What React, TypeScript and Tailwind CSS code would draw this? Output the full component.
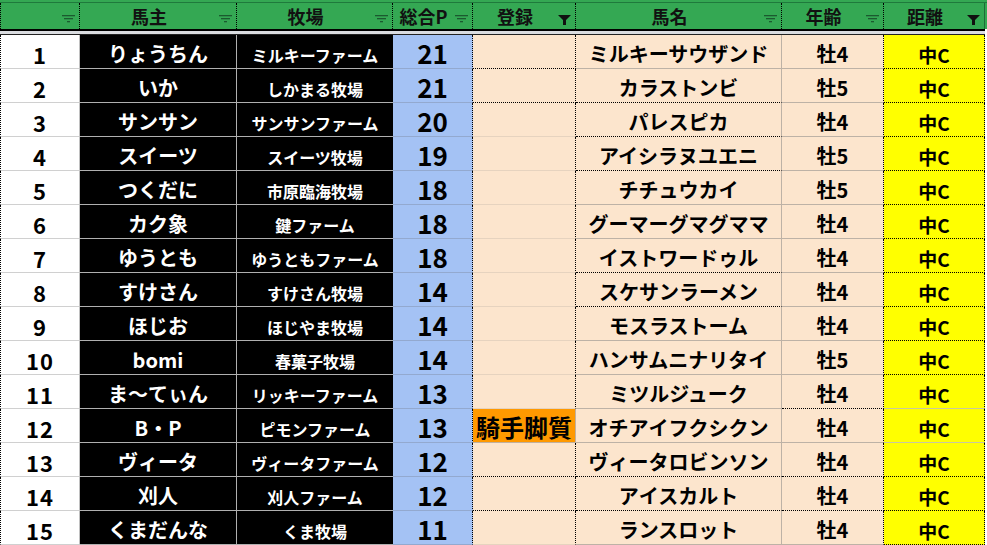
import React from "react";

type Line = "d" | "g";

type Row = {
  n: number;
  owner: string;
  farm: string;
  p: number;
  reg: string;
  horse: string;
  age: string;
  dist: string;
  // 下罫線: 登録 / 馬名 / 年齢 / 距離
  b: [Line, Line, Line, Line];
};

const rows: Row[] = [
  { n: 1, owner: "りょうちん", farm: "ミルキーファーム", p: 21, reg: "", horse: "ミルキーサウザンド", age: "牡4", dist: "中C", b: ["d", "g", "g", "d"] },
  { n: 2, owner: "いか", farm: "しかまる牧場", p: 21, reg: "", horse: "カラストンビ", age: "牡5", dist: "中C", b: ["d", "d", "g", "d"] },
  { n: 3, owner: "サンサン", farm: "サンサンファーム", p: 20, reg: "", horse: "パレスピカ", age: "牡4", dist: "中C", b: ["g", "d", "g", "d"] },
  { n: 4, owner: "スイーツ", farm: "スイーツ牧場", p: 19, reg: "", horse: "アイシラヌユエニ", age: "牡5", dist: "中C", b: ["g", "d", "g", "d"] },
  { n: 5, owner: "つくだに", farm: "市原臨海牧場", p: 18, reg: "", horse: "チチュウカイ", age: "牡5", dist: "中C", b: ["g", "g", "g", "d"] },
  { n: 6, owner: "カク象", farm: "鍵ファーム", p: 18, reg: "", horse: "グーマーグマグママ", age: "牡4", dist: "中C", b: ["g", "g", "g", "d"] },
  { n: 7, owner: "ゆうとも", farm: "ゆうともファーム", p: 18, reg: "", horse: "イストワードゥル", age: "牡4", dist: "中C", b: ["g", "d", "g", "d"] },
  { n: 8, owner: "すけさん", farm: "すけさん牧場", p: 14, reg: "", horse: "スケサンラーメン", age: "牡4", dist: "中C", b: ["g", "d", "g", "d"] },
  { n: 9, owner: "ほじお", farm: "ほじやま牧場", p: 14, reg: "", horse: "モスラストーム", age: "牡4", dist: "中C", b: ["g", "g", "g", "d"] },
  { n: 10, owner: "bomi", farm: "春菓子牧場", p: 14, reg: "", horse: "ハンサムニナリタイ", age: "牡5", dist: "中C", b: ["g", "g", "g", "d"] },
  { n: 11, owner: "ま〜てぃん", farm: "リッキーファーム", p: 13, reg: "", horse: "ミツルジューク", age: "牡4", dist: "中C", b: ["g", "g", "d", "g"] },
  { n: 12, owner: "B・P", farm: "ピモンファーム", p: 13, reg: "騎手脚質", horse: "オチアイフクシクン", age: "牡4", dist: "中C", b: ["g", "g", "g", "g"] },
  { n: 13, owner: "ヴィータ", farm: "ヴィータファーム", p: 12, reg: "", horse: "ヴィータロビンソン", age: "牡4", dist: "中C", b: ["d", "d", "d", "d"] },
  { n: 14, owner: "刈人", farm: "刈人ファーム", p: 12, reg: "", horse: "アイスカルト", age: "牡4", dist: "中C", b: ["d", "d", "d", "d"] },
  { n: 15, owner: "くまだんな", farm: "くま牧場", p: 11, reg: "", horse: "ランスロット", age: "牡4", dist: "中C", b: ["g", "g", "g", "d"] },
];

const font = { fontFamily: '"Noto Sans CJK JP", "Noto Sans", sans-serif' };

function FilterIcon() {
  return (
    <svg width="13" height="8" viewBox="0 0 13 8" className="absolute right-[4px] bottom-[6px]">
      <rect x="0" y="0" width="13" height="1.3" fill="#1b5a2f" />
      <rect x="2" y="3" width="9" height="1.3" fill="#1b5a2f" />
      <rect x="5" y="6" width="3" height="1.3" fill="#1b5a2f" />
    </svg>
  );
}

function FunnelIcon() {
  return (
    <svg width="13" height="10" viewBox="0 0 13 10" className="absolute right-[4px] bottom-[4px]">
      <path d="M0 0 H13 L8 5 V10 H5 V5 Z" fill="#111" />
    </svg>
  );
}

function Head({ w, label, active, last }: { w: string; label: string; active?: boolean; last?: boolean }) {
  return (
    <div
      className={`relative flex items-center justify-center pr-[18px] text-[18px] leading-none font-bold text-[#111] ${w} ${
        last ? "border-r border-r-[#1e6b37]" : "border-r border-r-black [border-right-style:dotted]"
      }`}
    >
      {label}
      {active ? <FunnelIcon /> : <FilterIcon />}
    </div>
  );
}

const dotB = "border-b border-b-black [border-bottom-style:dotted]";

export default function App() {
  return (
    <div className="w-[987px] h-[545px] overflow-hidden bg-white" style={font}>
      {/* ヘッダー */}
      <div className="h-[29px] bg-[#34a853] pt-[2px]">
        <div className="flex h-[27px] border-t border-t-[#1f7a3c]">
          <div className="relative w-[80px] border-l border-l-black [border-left-style:dotted] border-r border-r-black [border-right-style:dotted]">
            <FilterIcon />
          </div>
          <Head w="w-[157px]" label="馬主" />
          <Head w="w-[156px]" label="牧場" />
          <Head w="w-[80px]" label="総合P" />
          <Head w="w-[103px]" label="登録" active />
          <Head w="w-[206px]" label="馬名" />
          <Head w="w-[102px]" label="年齢" />
          <Head w="w-[101px]" label="距離" active last />
        </div>
      </div>
      <div className="h-[2px] w-[985px] bg-black" />
      <div className="h-[3px] w-[985px] bg-[#dadce0]" />
      <div className="h-[1px] w-[985px] bg-[#222]" />

      {/* 本体 */}
      {rows.map((r) => (
        <div key={r.n} className="flex h-[34px] font-bold leading-none">
          <div className="flex w-[80px] items-center justify-center pt-[4px] text-[22px] tracking-[1px] text-black bg-white border-l border-l-black [border-left-style:dotted] border-r border-r-[#c0c0c0] border-b border-b-[#d0d0d0]">
            {r.n}
          </div>
          <div className="flex w-[157px] items-center justify-center pt-[4px] text-[20px] text-white bg-black border-r border-r-[#b0b0b0] border-b border-b-[#b0b0b0]">
            {r.owner}
          </div>
          <div className="flex w-[156px] items-center justify-center pt-[6px] text-[16px] text-white bg-black border-b border-b-[#b0b0b0]">
            {r.farm}
          </div>
          <div className="flex w-[80px] items-center justify-center pt-[3px] text-[26px] text-black bg-[#a4c2f4] border-r border-r-black [border-right-style:dotted] border-b border-b-[#93a9cf]">
            {r.p}
          </div>
          <div
            className={`flex w-[103px] items-center pl-[3px] pt-[3px] text-[24px] text-black border-r ${
              r.reg ? "bg-[#ff9900] border-r-[#c0b0a0] border-b border-b-[#c0b0a0]" : "bg-[#fce5cd] border-r-black [border-right-style:dotted]"
            } ${!r.reg && r.b[0] === "d" ? dotB : ""} ${!r.reg && r.b[0] === "g" ? "border-b border-b-[#e6d3bf]" : ""}`}
          >
            {r.reg}
          </div>
          <div
            className={`flex w-[206px] items-center justify-center pt-[4px] text-[20px] text-black bg-[#fce5cd] border-r border-r-[#bdb2a6] ${
              r.b[1] === "d" ? dotB : "border-b border-b-[#bdb2a6]"
            }`}
          >
            {r.horse}
          </div>
          <div
            className={`flex w-[102px] items-center justify-center pt-[5px] text-[20px] text-black bg-[#fce5cd] border-r border-r-black [border-right-style:dotted] ${
              r.b[2] === "d" ? dotB : "border-b border-b-[#bdb2a6]"
            }`}
          >
            {r.age}
          </div>
          <div
            className={`flex w-[101px] items-center justify-center pt-[5px] text-[19px] text-black bg-[#ffff00] border-r border-r-black [border-right-style:dotted] ${
              r.b[3] === "d" ? dotB : "border-b border-b-[#c8c8a0]"
            }`}
          >
            {r.dist}
          </div>
        </div>
      ))}
    </div>
  );
}
